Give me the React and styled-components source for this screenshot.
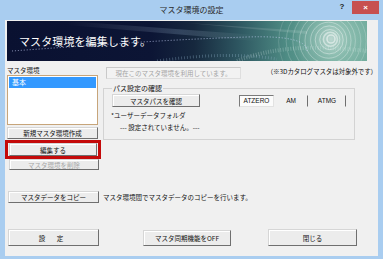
import React from "react";
import styled, { createGlobalStyle, css } from "styled-components";

const Global = createGlobalStyle`
  html, body { margin: 0; padding: 0; background: #a6caf0; }
  body { font-family: "Noto Sans CJK JP", "Noto Sans", sans-serif; }
  * { box-sizing: border-box; }
`;

const Window = styled.div`
  width: 383px;
  height: 259px;
  background: #a9cdf0;
  display: flex;
  flex-direction: column;
  overflow: hidden;
`;

const TitleBar = styled.div`
  height: 20px;
  flex: none;
  display: grid;
  grid-template-columns: 1fr auto auto;
  align-items: start;
  position: relative;
`;

const TitleText = styled.div`
  position: absolute;
  left: 0;
  right: 0;
  top: 5px;
  text-align: center;
  font-size: 8px;
  line-height: 10px;
  color: #2b2b2b;
`;

const Help = styled.div`
  grid-column: 2;
  width: 12px;
  margin-top: 2px;
  font-family: "Liberation Sans", sans-serif;
  font-weight: bold;
  font-size: 8px;
  line-height: 10px;
  color: #222;
  text-align: center;
  margin-right: 4px;
`;

const Close = styled.div`
  grid-column: 3;
  width: 27px;
  height: 13px;
  margin-top: 1px;
  margin-right: 4px;
  background: #c75050;
  color: #fff;
  font-family: "Liberation Sans", sans-serif;
  font-weight: bold;
  font-size: 8px;
  line-height: 13px;
  text-align: center;
`;

const Client = styled.div`
  flex: 1;
  margin: 0 5px 3px 5px;
  background: #f0f0f0;
  padding: 1px 1px 0 2px;
  display: flex;
  flex-direction: column;
  font-size: 6.5px;
  color: #111;
`;

const Banner = styled.div`
  position: relative;
  width: 360px;
  height: 40px;
  flex: none;
  overflow: hidden;
  background: linear-gradient(
    90deg,
    #0a1131 0%,
    #0c1535 40%,
    #16283e 52%,
    #2d5560 64%,
    #4f8d85 78%,
    #69a697 90%,
    #73ad9e 100%
  );
  display: flex;
  align-items: center;
  padding-left: 12px;
`;

const BannerArt = styled.svg`
  position: absolute;
  left: 0;
  top: 0;
`;

const BannerText = styled.div`
  position: relative;
  color: #fff;
  font-size: 11px;
  line-height: 14px;
  letter-spacing: 0.1px;
`;

const Main = styled.div`
  display: grid;
  grid-template-columns: 92px 1fr;
  column-gap: 4px;
`;

const LeftCol = styled.div`
  display: flex;
  flex-direction: column;
`;

const Label = styled.div`
  margin-top: 4px;
  height: 10px;
  line-height: 10px;
  font-size: 6.5px;
`;

const ListBox = styled.div`
  width: 91px;
  height: 50px;
  background: #fff;
  border: 1px solid #c7a57a;
  padding: 1px;
`;

const ListItem = styled.div`
  height: 11px;
  line-height: 11px;
  padding-left: 3px;
  font-size: 7px;
  background: ${(p) => (p.$selected ? "#3399ff" : "transparent")};
  color: ${(p) => (p.$selected ? "#fff" : "#000")};
`;

const Btn = styled.div`
  width: ${(p) => p.$w}px;
  height: ${(p) => p.$h}px;
  flex: none;
  margin-left: ${(p) => p.$ml || 0}px;
  margin-top: ${(p) => p.$mt || 0}px;
  background: #ececec;
  border: 1px solid;
  border-color: #d6d6d6 #6f6f6f #6f6f6f #d6d6d6;
  box-shadow: inset 1px 1px 0 #fff;
  display: flex;
  align-items: center;
  justify-content: center;
  font-size: 6.5px;
  color: ${(p) => (p.$disabled ? "#a6a6a6" : "#111")};
  letter-spacing: ${(p) => p.$ls || 0}px;
  white-space: nowrap;
`;

const RedFrame = styled.div`
  margin: 1px 0 0 -2px;
  width: 96px;
  border: 3px solid #c40a0a;
  padding: 0 0 0 1px;
`;

const RightCol = styled.div`
  display: flex;
  flex-direction: column;
`;

const TopRow = styled.div`
  margin-top: 6px;
  height: 12px;
  display: flex;
  align-items: center;
  justify-content: space-between;
  padding-left: 3px;
`;

const DisabledField = styled.div`
  width: 135px;
  height: 12px;
  border: 1px solid #c9c9c9;
  border-right-color: #dedede;
  border-bottom-color: #dedede;
  background: #f2f2f2;
  color: #a4a4a4;
  font-size: 6.5px;
  line-height: 10px;
  text-align: center;
  white-space: nowrap;
`;

const Note = styled.div`
  font-size: 6.5px;
  line-height: 10px;
  margin-top: -4px;
  white-space: nowrap;
  letter-spacing: -0.1px;
`;

const Group = styled.fieldset`
  margin: 5px 0 0 0;
  width: 252px;
  border: 1px solid #d3d3d3;
  padding: 2px 0 7px 7px;
  min-width: 0;
`;

const Legend = styled.legend`
  padding: 0 1px;
  margin-left: 1px;
  font-size: 7px;
  line-height: 8px;
  height: 8px;
`;

const GroupRow = styled.div`
  display: flex;
  align-items: center;
  height: 13px;
`;

const Toggles = styled.div`
  display: flex;
  margin-left: 39px;
`;

const Toggle = styled.div`
  width: ${(p) => p.$w}px;
  height: 12px;
  font-family: "Liberation Sans", "Noto Sans", sans-serif;
  font-size: 6.5px;
  display: flex;
  align-items: center;
  justify-content: center;
  border: 1px solid;
  ${(p) =>
    p.$on
      ? css`
          background: #fbfbfb;
          border-color: #7a7a7a #e2e2e2 #e2e2e2 #7a7a7a;
        `
      : css`
          background: #f0f0f0;
          border-color: #f0f0f0 #6f6f6f #f0f0f0 #f0f0f0;
        `}
`;

const InfoLine = styled.div`
  font-size: 6.5px;
  line-height: 9px;
  height: 9px;
  margin-top: ${(p) => p.$mt}px;
  padding-left: ${(p) => p.$pl}px;
  white-space: nowrap;
`;

const CopyRow = styled.div`
  margin-top: 21px;
  display: flex;
  align-items: center;
  gap: 4px;
`;

const CopyText = styled.div`
  font-size: 6.5px;
  line-height: 9px;
  white-space: nowrap;
`;

const FooterRow = styled.div`
  margin-top: 26px;
  display: flex;
  align-items: center;
`;

function BannerDrawing() {
  const rings = [4, 7, 10, 14, 18, 23, 28, 34, 40, 47];
  return (
    <BannerArt width="360" height="40" viewBox="0 0 360 40">
      <defs>
        <radialGradient id="glow" cx="0.5" cy="0.5" r="0.5">
          <stop offset="0" stopColor="#ffffff" stopOpacity="0.55" />
          <stop offset="0.5" stopColor="#d8f0e6" stopOpacity="0.25" />
          <stop offset="1" stopColor="#d8f0e6" stopOpacity="0" />
        </radialGradient>
        <linearGradient id="streak" x1="0" x2="1" y1="0" y2="0">
          <stop offset="0" stopColor="#ffffff" stopOpacity="0" />
          <stop offset="0.6" stopColor="#bfe0ff" stopOpacity="0.18" />
          <stop offset="1" stopColor="#ffffff" stopOpacity="0" />
        </linearGradient>
      </defs>
      <path d="M60 0 L250 14 L250 20 L60 4 Z" fill="url(#streak)" />
      <path d="M180 2 L300 10 L300 13 Z" fill="#ffffff" opacity="0.12" />
      <circle cx="324" cy="18" r="40" fill="url(#glow)" />
      {rings.map((r, i) => (
        <circle
          key={r}
          cx={324 - i * 0.6}
          cy={18 + i * 0.3}
          r={r}
          fill="none"
          stroke="#ffffff"
          strokeOpacity={0.5 - i * 0.04}
          strokeWidth={i < 2 ? 1.6 : 1}
        />
      ))}
      <path
        d="M5 30 Q 60 26 120 22 T 240 16 T 300 30"
        fill="none"
        stroke="#cfd8ff"
        strokeOpacity="0.7"
        strokeWidth="1"
        strokeDasharray="1 2"
      />
      <path
        d="M150 40 Q 220 30 270 38"
        fill="none"
        stroke="#8fb3c8"
        strokeOpacity="0.35"
        strokeWidth="3"
        strokeDasharray="1 2"
      />
      <path
        d="M230 40 Q 280 20 360 30"
        fill="none"
        stroke="#e0f5ee"
        strokeOpacity="0.25"
        strokeWidth="4"
        strokeDasharray="1 1.5"
      />
    </BannerArt>
  );
}

export default function App() {
  return (
    <>
      <Global />
      <Window>
        <TitleBar>
          <TitleText>マスタ環境の設定</TitleText>
          <Help>?</Help>
          <Close>×</Close>
        </TitleBar>
        <Client>
          <Banner>
            <BannerDrawing />
            <BannerText>マスタ環境を編集します。</BannerText>
          </Banner>
          <Main>
            <LeftCol>
              <Label>マスタ環境</Label>
              <ListBox>
                <ListItem $selected>基本</ListItem>
              </ListBox>
              <Btn $w={91} $h={12} $mt={2}>
                新規マスタ環境作成
              </Btn>
              <RedFrame>
                <Btn $w={88} $h={13}>
                  編集する
                </Btn>
              </RedFrame>
              <Btn $w={90} $h={11} $ml={2} $disabled>
                マスタ環境を削除
              </Btn>
            </LeftCol>
            <RightCol>
              <TopRow>
                <DisabledField>現在このマスタ環境を利用しています。</DisabledField>
                <Note>（※3Dカタログマスタは対象外です）</Note>
              </TopRow>
              <Group>
                <Legend>パス設定の確認</Legend>
                <GroupRow>
                  <Btn $w={88} $h={13} $ml={1}>
                    マスタパスを確認
                  </Btn>
                  <Toggles>
                    <Toggle $w={35} $on>
                      ATZERO
                    </Toggle>
                    <Toggle $w={34}>AM</Toggle>
                    <Toggle $w={38}>ATMG</Toggle>
                  </Toggles>
                </GroupRow>
                <InfoLine $mt={4} $pl={0}>
                  *ユーザーデータフォルダ
                </InfoLine>
                <InfoLine $mt={3} $pl={9}>
                  --- 設定されていません。---
                </InfoLine>
              </Group>
            </RightCol>
          </Main>
          <CopyRow>
            <Btn $w={91} $h={12} $ml={1}>
              マスタデータをコピー
            </Btn>
            <CopyText>マスタ環境間でマスタデータのコピーを行います。</CopyText>
          </CopyRow>
          <FooterRow>
            <Btn $w={91} $h={17} $ml={1} $ls={5}>
              設 定
            </Btn>
            <Btn $w={88} $h={16} $ml={44}>
              マスタ同期機能をOFF
            </Btn>
            <Btn $w={89} $h={17} $ml={37}>
              閉じる
            </Btn>
          </FooterRow>
        </Client>
      </Window>
    </>
  );
}
